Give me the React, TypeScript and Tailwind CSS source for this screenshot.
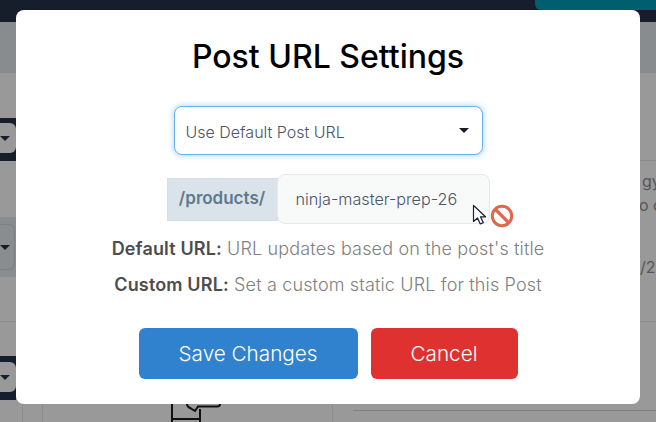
import React from 'react';

const font = "font-['Inter','Noto_Sans',sans-serif]";

const Caret = () => (
  <span className="w-0 h-0 border-x-[5px] border-x-transparent border-t-[5px] border-t-[#161e2b]" />
);

const Backdrop = () => (
  <div className="w-[656px] h-[422px] overflow-hidden flex flex-col bg-[#999999]">
    <div className="h-[22px] shrink-0 bg-[#161e2b] flex justify-end items-start">
      <div className="w-[121px] h-[10px] bg-[#005f6f] rounded-bl-[6px]" />
    </div>
    <div className="h-[51px] shrink-0 bg-[#888c8e]" />
    <div className="h-[45px] shrink-0" />
    <div className="h-[43px] shrink-0 flex justify-between">
      <div className="w-[16px] bg-[#161e2b] flex flex-col pt-[5px] pb-[8px]">
        <div className="flex-1 bg-[#999999] rounded-r-md flex items-center justify-start">
          <Caret />
        </div>
      </div>
      <div className="w-[16px] h-[43px] border-b border-[#8c8c8c]" />
    </div>
    <div className="h-[56px] shrink-0 relative">
      <div className="absolute left-[642px] top-[10px] text-[16px] leading-[20px] text-[#555555] whitespace-nowrap">gy</div>
      <div className="absolute left-[639px] top-[34px] text-[16px] leading-[20px] text-[#555555] whitespace-nowrap">o c</div>
    </div>
    <div className="h-[60px] shrink-0 relative">
      <div className="w-[40px] h-full bg-[#8a8d8f] py-[7px]">
        <div className="w-[15px] h-full rounded-r-md border border-l-0 border-[#7e8184] flex items-center">
          <Caret />
        </div>
      </div>
      <div className="absolute left-[640px] top-[40px] text-[16px] leading-[20px] text-[#555555] whitespace-nowrap">/20</div>
    </div>
    <div className="h-[45px] shrink-0 border-b border-[#8c8c8c]" />
    <div className="h-[34px] shrink-0" />
    <div className="h-[44px] shrink-0 w-[16px] bg-[#161e2b] flex flex-col pt-[6px] pb-[8px]">
      <div className="flex-1 bg-[#999999] rounded-r-md flex items-center">
        <Caret />
      </div>
    </div>
    <div className="flex-1 relative flex">
      <div className="w-[23px] border-r border-[#8c8c8c]" />
      <div className="w-[20px] border-r border-[#8c8c8c]" />
      <div className="w-[127px]" />
      <svg width="52" height="18" viewBox="0 0 52 18" className="shrink-0 mt-[4px]" fill="none" stroke="#111111" strokeWidth="2">
        <path d="M2 0v18M30 5v13M2 15h28" />
        <path d="M17 0c0 2 1 3 3 4l5 3 3-4.500h19c2 0 3-1 3-2.500" />
      </svg>
      <div className="w-[111px] border-r border-[#8c8c8c]" />
      <div className="flex-1 flex justify-end">
        <div className="w-[303px] h-[11px] border-b border-[#808080]" />
      </div>
    </div>
  </div>
);

const Cursor = () => (
  <svg width="16" height="22" viewBox="0 0 16 22" className="absolute left-[472px] top-[204px]">
    <path d="M1.500 1.500v16l4-3.500 2.800 6 3-1.400-2.800-5.800h5z" fill="#fff" stroke="#1a2030" strokeWidth="1.200" strokeLinejoin="round" />
  </svg>
);

const NoEntry = () => (
  <svg width="24" height="24" viewBox="0 0 24 24" className="absolute left-[490px] top-[204px]">
    <circle cx="12" cy="12" r="9.700" fill="#fff" stroke="#dd6a4c" strokeWidth="3" />
    <path d="M5.500 5.500l13 13" stroke="#dd6a4c" strokeWidth="3.200" />
  </svg>
);

export default function App() {
  return (
    <div className={`relative w-[656px] h-[422px] overflow-hidden ${font}`}>
      <Backdrop />
      <div className="absolute left-[16px] top-[10px] w-[624px] h-[394px] bg-white rounded-[8px] flex flex-col items-center pt-[25px]">
        <h1 className="text-[32px] leading-[44px] font-medium text-black">Post URL Settings</h1>
        <div className="mt-[27px] w-[309px] h-[49px] rounded-[8px] border border-[#63b3ed] shadow-[0_0_4px_2px_rgba(99,179,237,0.35)] bg-white flex items-center justify-between pl-[11px] pr-[13px]">
          <span className="text-[16px] font-light pt-[2px] text-[#4a5568]">Use Default Post URL</span>
          <Caret />
        </div>
        <div className="mt-[19px] flex items-center">
          <div className="w-[111px] h-[43px] bg-[#dae3ea] border border-[#d5dee6] flex items-center justify-center text-[17px] font-semibold text-[#5f7a8e]">/products/</div>
          <div className="w-[213px] h-[50px] -ml-px bg-[#f8f9f9] border border-[#e6e8ea] rounded-[8px] flex items-center pl-[18px] pt-[1px] text-[16.2px] font-light text-[#4a5568]">ninja-master-prep-26</div>
        </div>
        <p className="mt-[13px] text-[18px] leading-[24px] tracking-[0.15px] font-light text-[#808080]"><b className="font-semibold text-[#4d4d4d]">Default URL:</b> URL updates based on the post's title</p>
        <p className="mt-[12px] text-[18px] leading-[24px] tracking-[0.15px] font-light text-[#808080]"><b className="font-semibold text-[#4d4d4d]">Custom URL:</b> Set a custom static URL for this Post</p>
        <div className="mt-[31px] flex gap-[13px]">
          <button className="w-[219px] h-[51px] rounded-[6px] bg-[#3182ce] text-white text-[20.7px] font-light">Save Changes</button>
          <button className="w-[147px] h-[51px] rounded-[6px] bg-[#e03131] text-white text-[20.7px] font-light">Cancel</button>
        </div>
      </div>
      <Cursor />
      <NoEntry />
    </div>
  );
}
